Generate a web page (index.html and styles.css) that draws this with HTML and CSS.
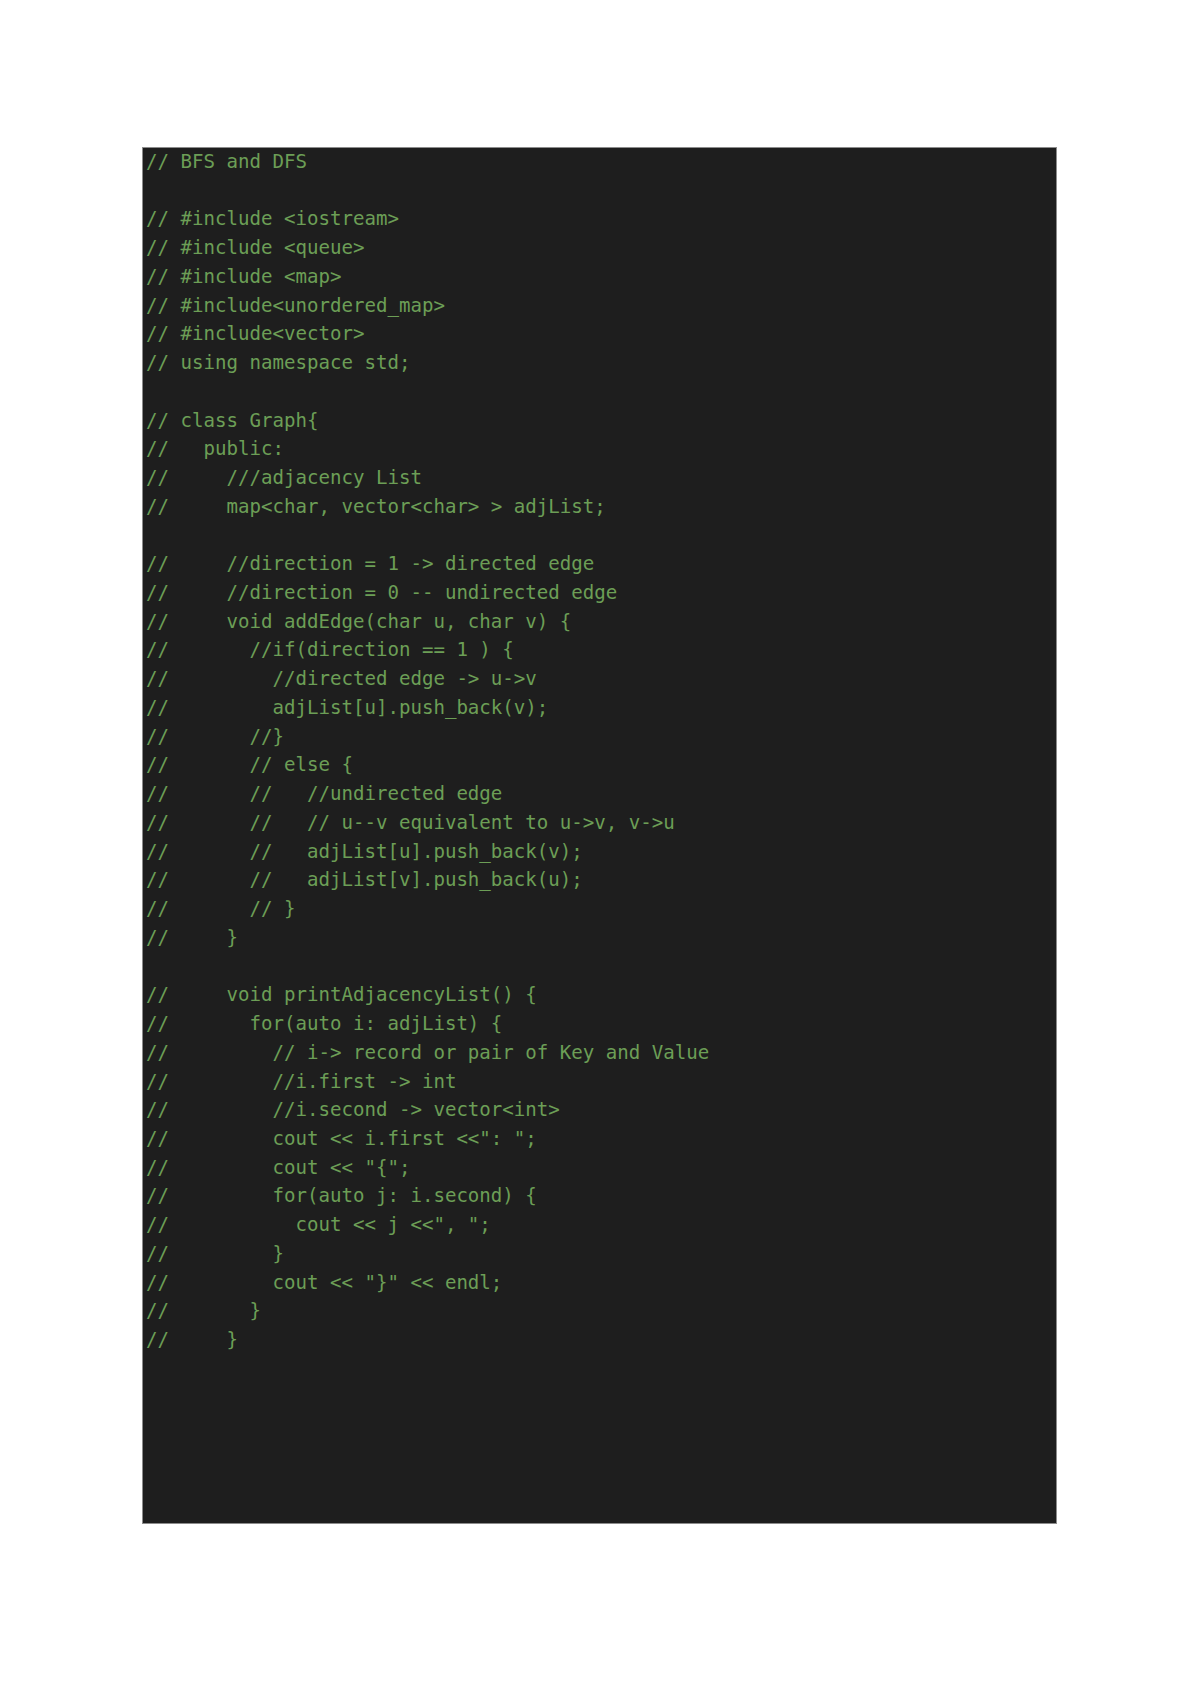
FILE: index.html
```html
<!DOCTYPE html>
<html lang="en">
<head>
<meta charset="utf-8">
<title>BFS and DFS</title>
<link rel="stylesheet" href="styles.css">
</head>
<body>
<main class="page">
<div class="code-box">
<pre class="code">// BFS and DFS

// #include &lt;iostream&gt;
// #include &lt;queue&gt;
// #include &lt;map&gt;
// #include&lt;unordered_map&gt;
// #include&lt;vector&gt;
// using namespace std;

// class Graph{
//   public:
//     ///adjacency List
//     map&lt;char, vector&lt;char&gt; &gt; adjList;

//     //direction = 1 -&gt; directed edge
//     //direction = 0 -- undirected edge
//     void addEdge(char u, char v) {
//       //if(direction == 1 ) {
//         //directed edge -&gt; u-&gt;v
//         adjList[u].push_back(v);
//       //}
//       // else {
//       //   //undirected edge
//       //   // u--v equivalent to u-&gt;v, v-&gt;u
//       //   adjList[u].push_back(v);
//       //   adjList[v].push_back(u);
//       // }
//     }

//     void printAdjacencyList() {
//       for(auto i: adjList) {
//         // i-&gt; record or pair of Key and Value
//         //i.first -&gt; int
//         //i.second -&gt; vector&lt;int&gt;
//         cout &lt;&lt; i.first &lt;&lt;": ";
//         cout &lt;&lt; "{";
//         for(auto j: i.second) {
//           cout &lt;&lt; j &lt;&lt;", ";
//         }
//         cout &lt;&lt; "}" &lt;&lt; endl;
//       }
//     }</pre>
</div>
</main>
</body>
</html>
```

FILE: styles.css
```css
html, body {
  margin: 0;
  padding: 0;
  background: #ffffff;
}

.page {
  padding: 147px 0 0 142px;
}

.code-box {
  box-sizing: border-box;
  width: 915px;
  height: 1377px;
  background: #1e1e1e;
  border: 1px solid #8c8c8c;
  padding: 0 0 0 3px;
  overflow: hidden;
}

.code {
  margin: 0;
  font-family: "DejaVu Sans Mono", "Liberation Mono", monospace;
  font-size: 19.1px;
  line-height: 28.74px;
  color: #6c9e56;
  white-space: pre;
}
```
